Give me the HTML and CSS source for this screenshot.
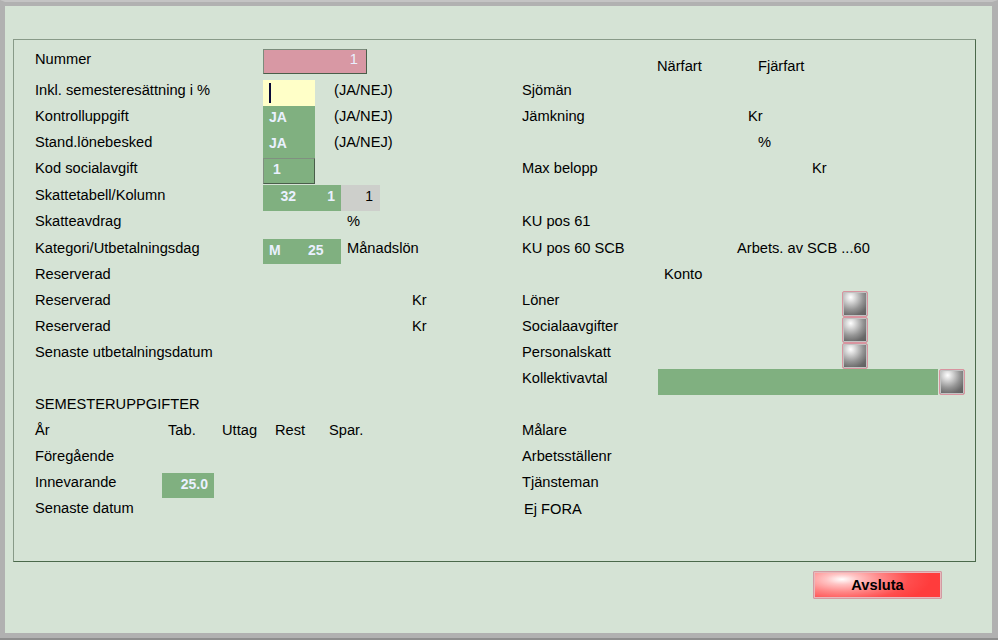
FILE: index.html
```html
<!DOCTYPE html>
<html lang="sv">
<head>
<meta charset="utf-8">
<title>Anställd</title>
<link rel="stylesheet" href="styles.css">
</head>
<body>
<div class="window">
  <div class="panel">
    <div class="row r1">
      <div class="left">
        <span class="lbl">Nummer</span>
        <span class="fld pink w104 num">1</span>
      </div>
      <div class="right">
        <span class="txt hdr c135"></span><span class="txt hdr c101">Närfart</span><span class="txt hdr">Fjärfart</span>
      </div>
    </div>
    <div class="row">
      <div class="left">
        <span class="lbl">Inkl. semesteresättning i %</span>
        <span class="fld yellow w52"><span class="cursor"></span></span>
        <span class="txt sfx">(JA/NEJ)</span>
      </div>
      <div class="right"><span class="txt">Sjömän</span></div>
    </div>
    <div class="row">
      <div class="left">
        <span class="lbl">Kontrolluppgift</span>
        <span class="fld green w52 bold pl6">JA</span>
        <span class="txt sfx">(JA/NEJ)</span>
      </div>
      <div class="right"><span class="txt c226">Jämkning</span><span class="txt">Kr</span></div>
    </div>
    <div class="row">
      <div class="left">
        <span class="lbl">Stand.lönebesked</span>
        <span class="fld green w52 bold pl6">JA</span>
        <span class="txt sfx">(JA/NEJ)</span>
      </div>
      <div class="right"><span class="txt c236"></span><span class="txt">%</span></div>
    </div>
    <div class="row h27">
      <div class="left">
        <span class="lbl">Kod socialavgift</span>
        <span class="fld green w52 bold framed pl9">1</span>
      </div>
      <div class="right"><span class="txt c290">Max belopp</span><span class="txt">Kr</span></div>
    </div>
    <div class="row">
      <div class="left">
        <span class="lbl">Skattetabell/Kolumn</span>
        <span class="fld green w78 bold split">
          <span class="sub right-al pr6">32</span><span class="sub right-al pr6">1</span>
        </span>
        <span class="fld grey w39 right-al pr7">1</span>
      </div>
      <div class="right"></div>
    </div>
    <div class="row h27">
      <div class="left">
        <span class="lbl">Skatteavdrag</span>
        <span class="txt c84"></span><span class="txt">%</span>
      </div>
      <div class="right"><span class="txt">KU pos 61</span></div>
    </div>
    <div class="row">
      <div class="left">
        <span class="lbl">Kategori/Utbetalningsdag</span>
        <span class="fld green w78 bold split low">
          <span class="sub pl6">M</span><span class="sub pl6">25</span>
        </span>
        <span class="txt sfx6">Månadslön</span>
      </div>
      <div class="right"><span class="txt c215">KU pos 60 SCB</span><span class="txt">Arbets. av SCB ...60</span></div>
    </div>
    <div class="row">
      <div class="left"><span class="lbl">Reserverad</span></div>
      <div class="right"><span class="txt c142"></span><span class="txt">Konto</span></div>
    </div>
    <div class="row">
      <div class="left"><span class="lbl">Reserverad</span><span class="txt c149"></span><span class="txt">Kr</span></div>
      <div class="right"><span class="txt c320">Löner</span><span class="sq"></span></div>
    </div>
    <div class="row">
      <div class="left"><span class="lbl">Reserverad</span><span class="txt c149"></span><span class="txt">Kr</span></div>
      <div class="right"><span class="txt c320">Socialaavgifter</span><span class="sq"></span></div>
    </div>
    <div class="row">
      <div class="left"><span class="lbl">Senaste utbetalningsdatum</span></div>
      <div class="right"><span class="txt c320">Personalskatt</span><span class="sq"></span></div>
    </div>
    <div class="row">
      <div class="left"></div>
      <div class="right"><span class="txt c136">Kollektivavtal</span><span class="bar"></span><span class="sq"></span></div>
    </div>
    <div class="row">
      <div class="left"><span class="txt">SEMESTERUPPGIFTER</span></div>
      <div class="right"></div>
    </div>
    <div class="row">
      <div class="left">
        <span class="txt c133">År</span><span class="txt c54">Tab.</span><span class="txt c53">Uttag</span><span class="txt c54">Rest</span><span class="txt">Spar.</span>
      </div>
      <div class="right"><span class="txt">Målare</span></div>
    </div>
    <div class="row">
      <div class="left"><span class="txt">Föregående</span></div>
      <div class="right"><span class="txt">Arbetsställenr</span></div>
    </div>
    <div class="row">
      <div class="left"><span class="txt c127">Innevarande</span><span class="fld green w52 bold right-al pr6 low">25.0</span></div>
      <div class="right"><span class="txt">Tjänsteman</span></div>
    </div>
    <div class="row">
      <div class="left"><span class="txt">Senaste datum</span></div>
      <div class="right"><span class="txt efora">Ej FORA</span></div>
    </div>
  </div>
  <div class="footer">
    <button class="quit" type="button">Avsluta</button>
  </div>
</div>
</body>
</html>
```
FILE: styles.css
```css
* { box-sizing: border-box; }

html, body {
  margin: 0;
  padding: 0;
  background: #8e8e8e;
}

body {
  font-family: "Liberation Sans", Arial, sans-serif;
  font-size: 14.67px;
  color: #000;
}

.window {
  width: 998px;
  height: 638px;
  background: #d5e3d5;
  border-style: solid;
  border-color: #c4c4c4 #b1b1b1 #b1b1b1 #b1b1b1;
  border-width: 2px 6px 5px 5px;
  box-shadow: inset 0 4px 0 #b1b1b1;
  display: flex;
  flex-direction: column;
}

.panel {
  margin: 37px 0 0 8px;
  width: 963px;
  height: 523px;
  border: 1px solid;
  border-color: #889a88 #4b694b #4b694b #889a88;
  padding: 9px 0 0 21px;
}

.row {
  display: flex;
  height: 26px;
}
.row.r1 { height: 31px; }
.row.h27 { height: 27px; }

.left {
  width: 487px;
  flex: none;
  display: flex;
  align-items: flex-start;
}

.right {
  flex: 1;
  display: flex;
  align-items: flex-start;
}

.lbl, .txt {
  line-height: 21px;
  white-space: nowrap;
  flex: none;
}
.lbl { width: 228px; }
.hdr { padding-top: 7px; }

.sfx { margin-left: 19px; }
.sfx6 { margin-left: 6px; }
.efora { padding-top: 1px; margin-left: 2px; }

.c53 { width: 53px; }
.c54 { width: 54px; }
.c84 { width: 84px; }
.c101 { width: 101px; }
.c127 { width: 127px; }
.c133 { width: 133px; }
.c135 { width: 135px; }
.c136 { width: 136px; }
.c142 { width: 142px; }
.c149 { width: 149px; }
.c215 { width: 215px; }
.c226 { width: 226px; }
.c236 { width: 236px; }
.c290 { width: 290px; }
.c320 { width: 320px; }

/* fields */
.fld {
  flex: none;
  height: 26px;
  line-height: 23px;
  color: #eaf0ff;
  white-space: nowrap;
}
.fld.low { margin-top: 1px; height: 25px; line-height: 22px; }
.w39 { width: 39px; }
.w52 { width: 52px; }
.w78 { width: 78px; }
.w104 { width: 104px; }

.bold {
  font-weight: bold;
  font-size: 14px;
}
.pl6 { padding-left: 6px; }
.pl9 { padding-left: 9px; }
.pr6 { padding-right: 6px; }
.pr7 { padding-right: 7px; }
.right-al { text-align: right; }

.pink {
  background: #d898a4;
  height: 25px;
  border: 1px solid;
  border-color: #7c8c7c #4a5e4a #4a5e4a #7c8c7c;
}
.num {
  text-align: right;
  padding-right: 8px;
  line-height: 19px;
}

.yellow {
  background: #ffffc8;
  padding: 3px 0 0 6px;
}
.cursor {
  display: block;
  width: 2px;
  height: 20px;
  background: #0a0a3a;
}

.green { background: #80b080; }

.framed {
  border: 1px solid;
  border-color: #809080 #4a5e4a #4a5e4a #809080;
  line-height: 21px;
}

.grey {
  background: #cdcfcb;
  color: #000;
  font-size: 14px;
}

.split { display: flex; }
.sub {
  width: 39px;
  height: 100%;
}

/* square buttons */
.sq {
  flex: none;
  width: 26px;
  height: 26px;
  margin-top: 1px;
  border: 1px solid #d8949f;
  border-radius: 2px;
  box-shadow: inset 0 0 0 1px #c2c2c2;
  background: radial-gradient(circle at 32% 22%, #ffffff 0%, #d6d6d6 20%, #959595 50%, #6a6a6a 75%, #5a5a5a 100%);
}

.bar {
  flex: none;
  width: 280px;
  height: 26px;
  margin-top: 1px;
  margin-right: 1px;
  background: #80b080;
}

/* footer */
.footer {
  display: flex;
  justify-content: flex-end;
  padding-right: 50px;
  margin-top: 9px;
}

.quit {
  width: 129px;
  height: 28px;
  padding: 0;
  border: 1px solid #d29ba2;
  border-radius: 1px;
  box-shadow: inset 0 0 0 1px #e8b8bc;
  background: radial-gradient(ellipse 70% 110% at 22% 28%, #ffffff 0%, #ffc4c4 18%, #ff8686 45%, #ff4e4e 75%, #ff3c3c 100%);
  font-family: "Liberation Sans", Arial, sans-serif;
  font-weight: bold;
  font-size: 14.67px;
  color: #000;
  line-height: 26px;
}
```
